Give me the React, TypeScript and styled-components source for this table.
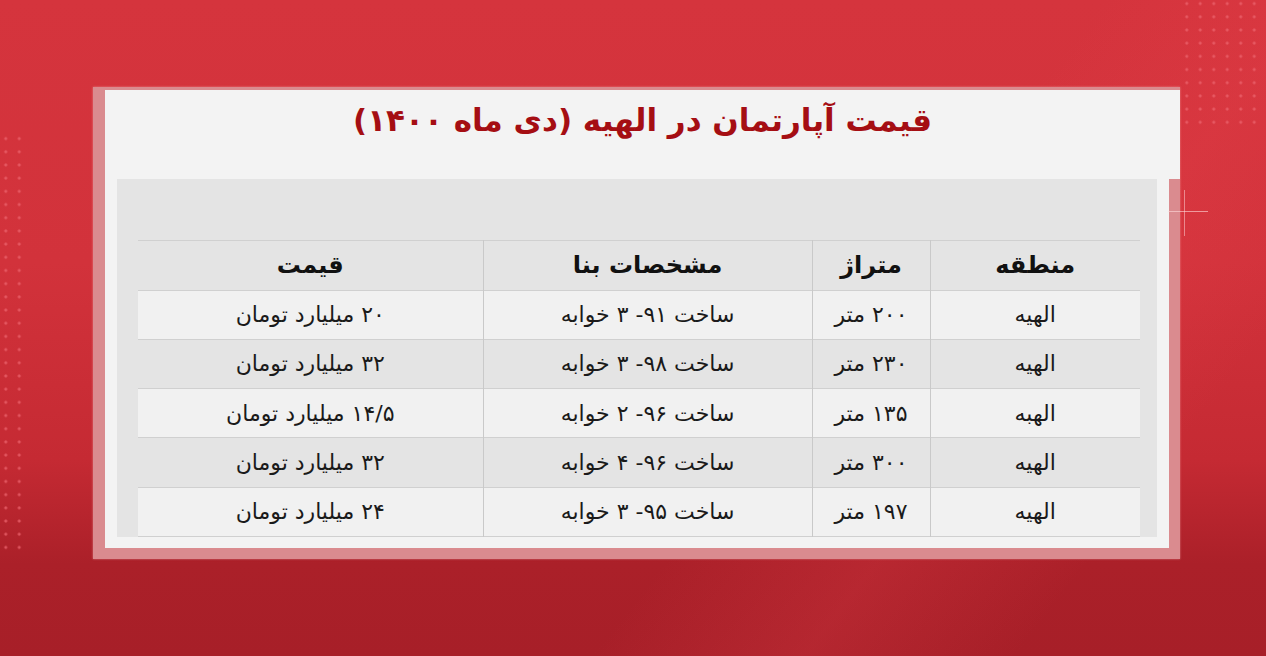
import React from "react";
import styled, { createGlobalStyle } from "styled-components";

const GlobalStyle = createGlobalStyle`
  html, body {
    margin: 0;
    padding: 0;
    background: #a8202a;
  }
  * {
    box-sizing: border-box;
  }
`;

const Page = styled.div`
  position: relative;
  width: 1266px;
  height: 656px;
  overflow: hidden;
  padding: 87px 0 0 93px;
  font-family: "DejaVu Sans", "Noto Sans", sans-serif;
  background:
    linear-gradient(128deg, rgba(255, 255, 255, 0) 62%, rgba(235, 70, 80, 0.2) 74%, rgba(255, 255, 255, 0) 86%),
    linear-gradient(180deg, #d5343d 0%, #d2323b 40%, #c52a33 70%, #ab2029 86%, #a71f28 100%);
`;

// decorative dot grids in the background
const Dots = styled.div<{ $cols: number; $rows: number }>`
  position: absolute;
  width: ${(p) => p.$cols * 13.5}px;
  height: ${(p) => p.$rows * 13.2}px;
  background-image: radial-gradient(circle, rgba(236, 100, 110, 0.75) 1.2px, transparent 1.8px);
  background-size: 13.5px 13.2px;
`;

const LeftDots = styled(Dots)`
  left: -1px;
  top: 132px;
`;

const RightDots = styled(Dots)`
  left: 1180px;
  top: -3px;
`;

const CrossH = styled.div`
  position: absolute;
  left: 1168px;
  top: 211px;
  width: 40px;
  height: 1px;
  background: rgba(255, 220, 220, 0.6);
`;

const CrossV = styled.div`
  position: absolute;
  left: 1184px;
  top: 190px;
  width: 1px;
  height: 46px;
  background: rgba(255, 220, 220, 0.5);
`;

const Frame = styled.div`
  width: 1087px;
  height: 472px;
  background: #da8b8f;
  padding: 3px 0 11px 12px;
  display: flex;
  flex-direction: column;
  box-shadow: 0 0 2px rgba(255, 200, 200, 0.5);
`;

const TitleBar = styled.div`
  height: 90px;
  background: #f3f3f3;
  display: flex;
  justify-content: center;
  padding-top: 5px;
`;

const Title = styled.h1`
  margin: 0;
  direction: rtl;
  font-weight: 700;
  font-size: 31px;
  line-height: 50px;
  color: #a50e13;
`;

const Body = styled.div`
  flex: 1;
  margin-right: 11px;
  background: #f3f3f3;
  padding: 0 12px 11px 12px;
  display: flex;
`;

const Sheet = styled.div`
  flex: 1;
  background: #e4e4e4;
  padding: 61px 17px 0 21px;
`;

const Table = styled.table`
  width: 100%;
  direction: rtl;
  border-collapse: collapse;
  table-layout: fixed;
`;

const Row = styled.tr<{ $light?: boolean }>`
  height: 49.3px;
  background: ${(p) => (p.$light ? "#f1f1f1" : "transparent")};
  border-top: 1px solid #d0d0d0;
  border-bottom: 1px solid #d0d0d0;
`;

const HeadCell = styled.th<{ $w: number }>`
  width: ${(p) => p.$w}px;
  padding: 0;
  text-align: center;
  font-weight: 700;
  font-size: 24px;
  color: #111;
  border-left: 1px solid #c9c9c9;
  &:last-child {
    border-left: none;
  }
`;

const Cell = styled.td`
  padding: 0;
  text-align: center;
  font-size: 22px;
  color: #1a1a1a;
  border-left: 1px solid #c9c9c9;
  &:last-child {
    border-left: none;
  }
`;

const columns = [
  { title: "منطقه", width: 210 },
  { title: "متراژ", width: 118 },
  { title: "مشخصات بنا", width: 329 },
  { title: "قیمت", width: 345 },
];

const rows = [
  ["الهیه", "۲۰۰ متر", "ساخت ۹۱- ۳ خوابه", "۲۰ میلیارد تومان"],
  ["الهیه", "۲۳۰ متر", "ساخت ۹۸- ۳ خوابه", "۳۲ میلیارد تومان"],
  ["الهبه", "۱۳۵ متر", "ساخت ۹۶- ۲ خوابه", "۱۴/۵ میلیارد تومان"],
  ["الهیه", "۳۰۰ متر", "ساخت ۹۶- ۴ خوابه", "۳۲ میلیارد تومان"],
  ["الهیه", "۱۹۷ متر", "ساخت ۹۵- ۳ خوابه", "۲۴ میلیارد تومان"],
];

export default function App() {
  return (
    <>
      <GlobalStyle />
      <Page>
        <LeftDots $cols={2} $rows={32} />
        <RightDots $cols={6} $rows={10} />
        <Frame>
          <TitleBar>
            <Title>قیمت آپارتمان در الهیه (دی ماه ۱۴۰۰)</Title>
          </TitleBar>
          <Body>
            <Sheet>
              <Table>
                <thead>
                  <Row>
                    {columns.map((c) => (
                      <HeadCell key={c.title} $w={c.width}>
                        {c.title}
                      </HeadCell>
                    ))}
                  </Row>
                </thead>
                <tbody>
                  {rows.map((r, i) => (
                    <Row key={i} $light={i % 2 === 0}>
                      {r.map((v, j) => (
                        <Cell key={j}>{v}</Cell>
                      ))}
                    </Row>
                  ))}
                </tbody>
              </Table>
            </Sheet>
          </Body>
        </Frame>
        <CrossH />
        <CrossV />
      </Page>
    </>
  );
}
